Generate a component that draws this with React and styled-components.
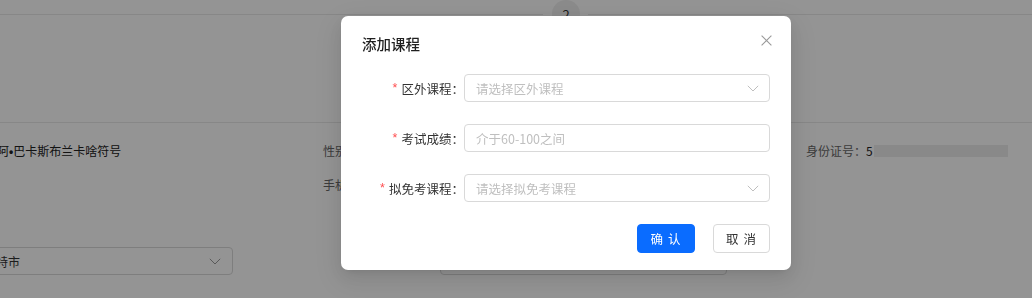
import styled, { createGlobalStyle } from 'styled-components'

const GlobalStyle = createGlobalStyle`
  body {
    margin: 0;
    overflow: hidden;
    font-family: "Noto Sans CJK SC", "Noto Sans", sans-serif;
    color: #333;
  }
`

const Page = styled.div`
  width: 100%;
  height: 298px;
  overflow: hidden;
  background: #fff;
`

const Steps = styled.div`
  display: flex;
  align-items: center;
  height: 28px;
`

const StepLine = styled.div`
  flex: ${p => (p.$width ? `0 0 ${p.$width}px` : '1')};
  height: 1px;
  background: #e8e8e8;
`

const StepDot = styled.div`
  width: 28px;
  height: 28px;
  margin: 0 8px 0 9px;
  border-radius: 50%;
  background: #f0f0f0;
  display: flex;
  align-items: center;
  justify-content: center;
  font-size: 13px;
  color: #333;
`

const HeaderSpace = styled.div`
  height: 94px;
`

const Info = styled.div`
  border-top: 1px solid #e8e8e8;
  padding-top: 19px;
  overflow: hidden;
`

const InfoGrid = styled.div`
  margin-left: -160px;
  display: grid;
  grid-template-columns: 483px 483px 1fr;
  align-items: start;
`

const Column = styled.div`
  display: flex;
  flex-direction: column;
  gap: 16px;
`

const Item = styled.div`
  display: flex;
  align-items: center;
  height: 18px;
  font-size: 12px;
  line-height: 18px;
  white-space: nowrap;
`

const ItemLabel = styled.span`
  flex: 0 0 ${p => p.$width || 'auto'};
  text-align: right;
  color: #666;
`

const ItemValue = styled.span`
  color: #222;
`

const Dot = styled.span`
  font-family: "Liberation Sans", sans-serif;
  font-weight: 700;
`

const Redacted = styled.span`
  display: inline-block;
  width: 134px;
  height: 12px;
  margin-left: 1px;
  background: #ececec;
`

const PageSelectRow = styled.div`
  display: flex;
  align-items: center;
  margin-top: 37px;
  font-size: 12px;
`

const PageSelect = styled.div`
  width: ${p => p.$width}px;
  height: 28px;
  box-sizing: border-box;
  border: 1px solid #d9d9d9;
  border-radius: 4px;
  padding: 0 11px;
  display: flex;
  align-items: center;
  justify-content: space-between;
  color: #333;
`

const Mask = styled.div`
  position: fixed;
  inset: 0;
  background: rgba(0, 0, 0, 0.42);
`

const Modal = styled.div`
  position: fixed;
  left: 341px;
  top: 16px;
  width: 450px;
  box-sizing: border-box;
  padding: 17px 21px 17px 21px;
  background: #fff;
  border-radius: 7px;
  box-shadow: 0 6px 16px 0 rgba(0, 0, 0, 0.08), 0 3px 6px -4px rgba(0, 0, 0, 0.12),
    0 9px 28px 8px rgba(0, 0, 0, 0.07);
`

const Title = styled.div`
  font-size: 14.5px;
  line-height: 22px;
  font-weight: 500;
  color: #1f1f1f;
`

const Close = styled.button`
  position: absolute;
  top: 19px;
  right: 19px;
  width: 11px;
  height: 11px;
  padding: 0;
  border: 0;
  background: none;
  display: flex;
  cursor: pointer;
`

const Form = styled.div`
  display: flex;
  flex-direction: column;
  gap: 22px;
  margin-top: 19px;
`

const FormRow = styled.div`
  display: flex;
  align-items: center;
`

const Label = styled.label`
  flex: 0 0 102px;
  display: flex;
  justify-content: flex-end;
  align-items: center;
  font-size: 12.5px;
  color: #333;
  white-space: nowrap;
`

const Required = styled.span`
  color: #ff4d4f;
  margin-right: 4px;
  font-family: "Liberation Sans", sans-serif;
`

const Field = styled.div`
  flex: 1;
  height: 28px;
  box-sizing: border-box;
  border: 1px solid #d9d9d9;
  border-radius: 4px;
  padding: 0 10px 0 11px;
  display: flex;
  align-items: center;
  justify-content: space-between;
  font-size: 12.5px;
  color: #bfbfbf;
`

const Footer = styled.div`
  display: flex;
  justify-content: flex-end;
  gap: 18px;
  margin-top: 22px;
`

const Button = styled.button`
  width: ${p => p.$width}px;
  height: 29px;
  box-sizing: border-box;
  border-radius: 4px;
  font-family: inherit;
  font-size: 12.5px;
  letter-spacing: 1px;
  cursor: pointer;
  border: 1px solid ${p => (p.$primary ? '#0a6cff' : '#d9d9d9')};
  background: ${p => (p.$primary ? '#0a6cff' : '#fff')};
  color: ${p => (p.$primary ? '#fff' : '#333')};
`

const Chevron = ({ color = '#bfbfbf' }) => (
  <svg width="12" height="7" viewBox="0 0 12 7" fill="none">
    <polyline points="0.8,0.8 6,6 11.2,0.8" stroke={color} strokeWidth="1" />
  </svg>
)

const XIcon = () => (
  <svg width="11" height="11" viewBox="0 0 11 11">
    <path d="M0.6 0.6 L10.4 10.4 M10.4 0.6 L0.6 10.4" stroke="#999" strokeWidth="1.1" />
  </svg>
)

const fields = [
  { label: '区外课程', placeholder: '请选择区外课程', select: true },
  { label: '考试成绩', placeholder: '介于60-100之间' },
  { label: '拟免考课程', placeholder: '请选择拟免考课程', select: true },
]

const App = () => {
  return (
    <>
      <GlobalStyle />
      <Page>
        <Steps>
          <StepLine $width={543} />
          <StepDot>2</StepDot>
          <StepLine />
        </Steps>
        <HeaderSpace />
        <Info>
          <InfoGrid>
            <Column>
              <Item>
                <ItemLabel $width="157px">姓名：</ItemLabel>
                <ItemValue>
                  阿<Dot>•</Dot>巴卡斯布兰卡啥符号
                </ItemValue>
              </Item>
              <Item />
              <PageSelectRow>
                <ItemLabel $width="108px">所在地：</ItemLabel>
                <PageSelect $width={285}>
                  <span>呼和浩特市</span>
                  <Chevron color="#999" />
                </PageSelect>
              </PageSelectRow>
            </Column>
            <Column>
              <Item>
                <ItemLabel>性别：</ItemLabel>
                <ItemValue>男</ItemValue>
              </Item>
              <Item>
                <ItemLabel>手机号：</ItemLabel>
                <ItemValue>138****0000</ItemValue>
              </Item>
              <PageSelectRow>
                <ItemLabel $width="117px">学习中心：</ItemLabel>
                <PageSelect $width={287}>
                  <span>请选择</span>
                  <Chevron color="#999" />
                </PageSelect>
              </PageSelectRow>
            </Column>
            <Column>
              <Item>
                <ItemLabel>身份证号：</ItemLabel>
                <ItemValue>5</ItemValue>
                <Redacted />
              </Item>
            </Column>
          </InfoGrid>
        </Info>
      </Page>

      <Mask />
      <Modal>
        <Title>添加课程</Title>
        <Close aria-label="关闭">
          <XIcon />
        </Close>
        <Form>
          {fields.map(f => (
            <FormRow key={f.label}>
              <Label>
                <Required>*</Required>
                <span>{f.label}：</span>
              </Label>
              <Field>
                <span>{f.placeholder}</span>
                {f.select && <Chevron />}
              </Field>
            </FormRow>
          ))}
        </Form>
        <Footer>
          <Button $primary $width={58}>确 认</Button>
          <Button $width={57}>取 消</Button>
        </Footer>
      </Modal>
    </>
  )
}

export default App
